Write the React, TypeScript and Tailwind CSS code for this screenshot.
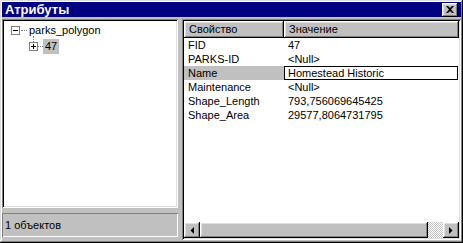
import React from 'react';

const rows = [
  { name: 'FID', value: '47' },
  { name: 'PARKS-ID', value: '<Null>' },
  { name: 'Name', value: 'Homestead Historic', editing: true },
  { name: 'Maintenance', value: '<Null>' },
  { name: 'Shape_Length', value: '793,756069645425' },
  { name: 'Shape_Area', value: '29577,8064731795' },
];

const raised =
  'shadow-[inset_-1px_-1px_#000,inset_1px_1px_#fff,inset_-2px_-2px_#808080,inset_2px_2px_#dfdfdf]';
const sunken =
  'shadow-[inset_1px_1px_#808080,inset_-1px_-1px_#fff,inset_2px_2px_#000,inset_-2px_-2px_#dfdfdf]';

function TreeBox({ open }: { open: boolean }) {
  return (
    <svg width="9" height="9" viewBox="0 0 9 9" className="block shrink-0">
      <rect x="0.5" y="0.5" width="8" height="8" fill="#fff" stroke="#808080" />
      <path d="M2 4.5H7" stroke="#000" />
      {!open && <path d="M4.5 2V7" stroke="#000" />}
    </svg>
  );
}

function Arrow({ dir }: { dir: 'left' | 'right' }) {
  return (
    <div className={`w-4 h-4 bg-[#c0c0c0] flex items-center justify-center ${raised}`}>
      <svg width="4" height="7" viewBox="0 0 4 7">
        {dir === 'left' ? <path d="M4 0V7L0.5 3.5Z" fill="#000" /> : <path d="M0 0V7L3.5 3.5Z" fill="#000" />}
      </svg>
    </div>
  );
}

export default function App() {
  return (
    <div
      className="w-[463px] h-[243px] bg-[#c0c0c0] p-[2px] flex flex-col text-[11px] text-black shadow-[inset_-1px_-1px_#000,inset_1px_1px_#dfdfdf,inset_-2px_-2px_#808080,inset_2px_2px_#fff]"
      style={{ fontFamily: '"Liberation Sans", Arial, sans-serif' }}
    >
      {/* title bar */}
      <div className="h-[15px] bg-[#000080] flex items-center justify-between pl-[3px] pr-[3px]">
        <span className="text-white font-bold text-[13px] leading-none">Атрибуты</span>
        <div className={`w-4 h-[14px] bg-[#c0c0c0] flex items-center justify-center ${raised}`}>
          <svg width="8" height="7" viewBox="0 0 8 7">
            <path d="M0 0h2l2 2 2-2h2L5 3.5 8 7H6L4 5 2 7H0l3-3.5Z" fill="#000" />
          </svg>
        </div>
      </div>

      <div className="flex flex-1 mt-[2px] gap-[4px] pb-[1px]">
        {/* left column */}
        <div className="w-[176px] flex flex-col">
          <div className={`h-[189px] bg-white ${sunken} pt-[7px] pl-[9px]`}>
            <div className="flex items-center h-[9px]">
              <TreeBox open />
              <div className="w-[6px] ml-[1px] border-t border-dotted border-[#808080]" />
              <span className="ml-[2px] leading-none">parks_polygon</span>
            </div>
            <div className="ml-[22px] w-px h-[6px] border-l border-dotted border-[#808080] mt-[1px]" />
            <div className="flex items-center ml-[18px] h-[9px]">
              <TreeBox open={false} />
              <div className="w-[5px] border-t border-dotted border-[#808080]" />
              <span className="bg-[#c0c0c0] px-[2px] leading-[15px]">47</span>
            </div>
          </div>
          <div className="mt-[5px] h-[24px] flex items-center pl-[3px] shadow-[inset_1px_1px_#808080,inset_-1px_-1px_#fff]">
            1 объектов
          </div>
        </div>

        {/* right panel */}
        <div className={`flex-1 bg-white ${sunken} p-[2px] flex flex-col`}>
          <div className="flex h-[17px]">
            <div className={`w-[100px] bg-[#c0c0c0] ${raised} flex items-center pl-[5px]`}>Свойство</div>
            <div className={`flex-1 bg-[#c0c0c0] ${raised} flex items-center pl-[5px]`}>Значение</div>
          </div>
          <div className="flex-1">
            {rows.map((r) => (
              <div key={r.name} className="flex h-[14px]">
                <div className={`w-[100px] pl-[4px] leading-[14px] ${r.editing ? 'bg-[#c0c0c0]' : ''}`}>{r.name}</div>
                {r.editing ? (
                  <div className="flex-1 border border-black pl-[3px] leading-[12px] mr-[1px]">{r.value}</div>
                ) : (
                  <div className="flex-1 pl-[4px] leading-[14px]">{r.value}</div>
                )}
              </div>
            ))}
          </div>
          <div className="flex h-4">
            <Arrow dir="left" />
            <div className={`w-[228px] bg-[#c0c0c0] ${raised}`} />
            <div className="flex-1 bg-[repeating-conic-gradient(#fff_0_25%,#c0c0c0_0_50%)] bg-[length:2px_2px]" />
            <Arrow dir="right" />
          </div>
        </div>
      </div>
    </div>
  );
}
